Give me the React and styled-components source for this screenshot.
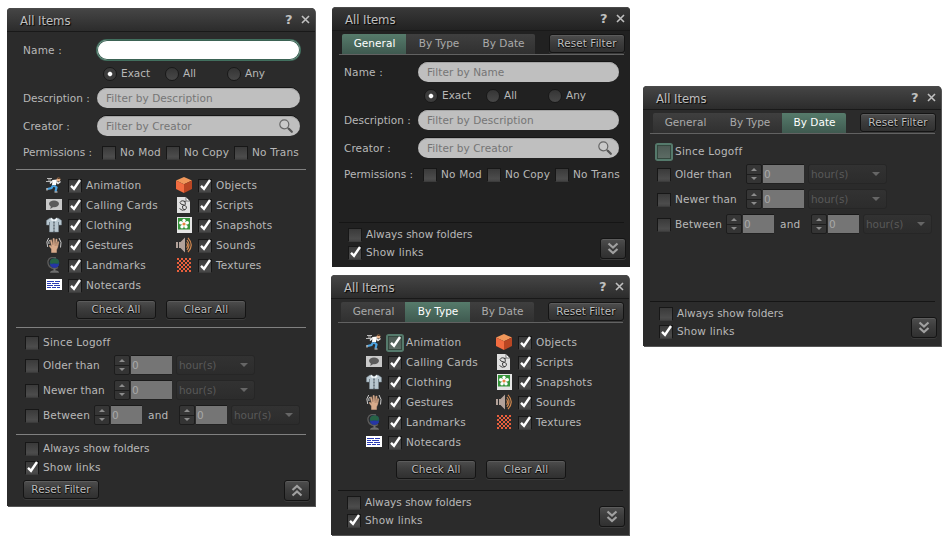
import React from "react";
import styled, { createGlobalStyle, css } from "styled-components";

const Global = createGlobalStyle`
  * { box-sizing: border-box; }
  body { margin: 0; background: #fff; }
`;

const Desktop = styled.div`
  position: relative;
  width: 951px;
  height: 538px;
  overflow: hidden;
  background: #fff;
  font: 10.5px/14px "DejaVu Sans", sans-serif;
  letter-spacing: 0.2px;
  color: #b8b8b8;
  white-space: nowrap;
`;

const Frame = styled.section`
  position: absolute;
  left: ${(p) => p.$x}px;
  top: ${(p) => p.$y}px;
  width: ${(p) => p.$w}px;
  height: ${(p) => p.$h}px;
  display: flex;
  flex-direction: column;
  background: ${(p) => (p.$dark ? "#212121" : "#2b2b2b")};
  border-radius: 4px 4px 0 0;
  box-shadow: ${(p) => (p.$dark ? "none" : "1px 1px 0 #555")};
`;

const TitleBar = styled.header`
  flex: none;
  display: flex;
  align-items: center;
  height: 24px;
  padding: 0 4px 0 13px;
  border-bottom: 1px solid #191919;
  border-top: 1px solid #4a4a4a;
  border-radius: 4px 4px 0 0;
  background: ${(p) =>
    p.$dark ? "linear-gradient(#383838, #222)" : "linear-gradient(#454545, #2c2c2c)"};
`;

const Title = styled.h1`
  flex: 1;
  margin: 0;
  padding-top: 1px;
  font-size: 11.7px;
  font-weight: normal;
  letter-spacing: -0.05px;
  color: #c0c0c0;
  text-shadow: 1px 1px 1px #000;
`;

const Help = styled.span`
  width: 15px;
  font-size: 13px;
  font-weight: bold;
  letter-spacing: 0;
  color: #c0c0c0;
`;

const Panel = styled.div`
  display: flex;
  flex-direction: column;
  padding: ${(p) => p.$top}px 0 0 ${(p) => p.$left}px;
`;

const Line = styled.div`
  flex: none;
  display: flex;
  align-items: center;
  height: ${(p) => p.$h}px;
  margin-top: ${(p) => p.$mt || 0}px;
  padding-left: ${(p) => p.$pl || 0}px;
`;

const Divider = styled.div`
  flex: none;
  height: 1px;
  margin: ${(p) => p.$mt || 0}px ${(p) => p.$mr}px 0 ${(p) => p.$ml}px;
  background: ${(p) => (p.$dark ? "#151515" : "#808080")};
`;

const FieldLabel = styled.span`
  flex: none;
  width: 74px;
  padding-bottom: ${(p) => (p.$flat ? 2 : 1)}px;
  letter-spacing: ${(p) => p.$ls || 0}px;
`;

const Field = styled.div`
  flex: none;
  display: flex;
  align-items: center;
  justify-content: space-between;
  width: ${(p) => p.$w}px;
  height: 20px;
  padding: 0 7px 0 9px;
  border-radius: 10px;
  color: #757575;
  letter-spacing: 0.06px;
  background: #bfbfbf;
  box-shadow: 0 -1px 0 #151515, inset 0 1px 0 #a4a4a4;
  span { padding-bottom: 1px; }
  ${(p) =>
    p.$focus &&
    css`
      background: #fff;
      box-shadow: inset 0 0 0 1px #3b6254, 0 0 0 1px #42705f;
    `}
`;

const RadioItem = styled.label`
  display: flex;
  align-items: center;
  gap: 4px;
  width: ${(p) => p.$w}px;
  letter-spacing: 0;
  span { padding-bottom: 2px; }
`;

const Dot = styled.i`
  width: 14px;
  height: 14px;
  border-radius: 50%;
  border: 1px solid #191919;
  background: ${(p) =>
    p.$on
      ? "radial-gradient(circle, #fff 0 1.6px, #3c3c3c 2.8px)"
      : "linear-gradient(#353535, #484848)"};
`;

const CheckItem = styled.label`
  flex: none;
  display: flex;
  align-items: center;
  height: 14px;
  margin-top: ${(p) => p.$drop || 0}px;
  width: ${(p) => (p.$w ? p.$w + "px" : "auto")};
`;

const Box = styled.i`
  flex: none;
  display: block;
  width: 14px;
  height: 14px;
  margin-right: 4px;
  border: 1px solid #171717;
  border-bottom-color: #3c3c3c;
  border-radius: 1px;
  background: linear-gradient(#3a3a3a, #4c4c4c 80%, #444);
  svg { display: block; overflow: visible; }
  ${(p) =>
    p.$focus &&
    css`
      border-color: #35483f;
      background: linear-gradient(#4d5b55, #5c6b64);
      box-shadow: 0 0 0 2px #557a6c;
    `}
`;

const buttonFace = css`
  border: 1px solid #141414;
  border-radius: 3px;
  background: linear-gradient(#4e4e4e, #3d3d3d 45%, #303030);
  box-shadow: inset 0 1px 0 #5c5c5c, 0 1px 0 #3a3a3a;
`;

const Button = styled.button`
  ${buttonFace}
  flex: none;
  width: ${(p) => p.$w}px;
  height: 19px;
  margin: 0 ${(p) => p.$mr || 0}px 0 0;
  padding: 0;
  font: inherit;
  line-height: 15px;
  letter-spacing: 0.05px;
  color: #bebebe;
  text-shadow: 0 1px 1px #000, 1px 0 1px #111;
`;

const ArrowButton = styled.button`
  ${buttonFace}
  display: flex;
  align-items: center;
  justify-content: center;
  width: 26px;
  height: 21px;
  padding: 0;
  margin: 0;
`;

const TabRow = styled.nav`
  flex: none;
  display: flex;
  justify-content: space-between;
  height: 21px;
  margin: 3px 6px 0 7px;
  border-bottom: 1px solid #626262;
  padding-left: 3px;
`;

const Tabs = styled.div`
  display: flex;
  height: 20px;
`;

const Tab = styled.span`
  width: ${(p) => p.$w}px;
  height: 20px;
  padding-left: 1px;
  line-height: 19px;
  text-align: center;
  letter-spacing: ${(p) => p.$ls}px;
  color: ${(p) => (p.$on ? "#fff" : "#aaa")};
  background: ${(p) =>
    p.$on ? "linear-gradient(#567b6b, #3f5a50)" : "linear-gradient(#3f3f3f, #303030)"};
  &:first-child { border-top-left-radius: 2px; }
  &:last-child { border-top-right-radius: 2px; }
`;

const Columns = styled.div`
  display: grid;
  grid-template-columns: 130px auto;
  align-items: start;
`;

const TypeRow = styled.div`
  display: flex;
  align-items: center;
  height: 20px;
`;

const Caption = styled.span`
  padding-bottom: 2px;
  letter-spacing: ${(p) => (p.$ls === undefined ? "inherit" : p.$ls + "px")};
`;

const Spin = styled.span`
  flex: none;
  display: grid;
  grid-template-rows: 1fr 1fr;
  place-items: center;
  width: 16px;
  height: 20px;
  margin-right: 1px;
  border: 1px solid #1c1c1c;
  border-radius: 2px;
  background: linear-gradient(#363636 0 9px, #1d1d1d 9px 10px, #343434 10px);
`;

const NumberBox = styled.span`
  flex: none;
  width: ${(p) => p.$w}px;
  height: 20px;
  padding: 2px 0 0 1px;
  line-height: 14px;
  margin-right: ${(p) => p.$mr}px;
  border-top: 1px solid #1a1a1a;
  border-bottom: 1px solid #222;
  color: #a8a8a8;
  background: #757575;
`;

const Combo = styled.span`
  flex: none;
  display: flex;
  align-items: center;
  justify-content: space-between;
  width: ${(p) => p.$w}px;
  height: 20px;
  padding: 0 6px 0 2px;
  border: 1px solid #262626;
  border-radius: 3px;
  letter-spacing: -0.05px;
  color: #595959;
  background: linear-gradient(#323232, #2c2c2c);
`;

const Conjunction = styled.span`
  width: 31px;
`;

const Footer = styled.footer`
  flex: none;
  display: flex;
  justify-content: space-between;
  align-items: flex-start;
  height: 44px;
  padding: 5px 4px 0 16px;
`;

const Corner = styled.div`
  padding-top: 10px;
`;

const Stack = styled.div`
  display: flex;
  flex-direction: column;
  gap: ${(p) => p.$gap}px;
`;

const BottomBar = styled.div`
  display: flex;
  justify-content: space-between;
  margin-top: 5px;
  padding: 0 5px 0 16px;
`;

const Spacer = styled.div`
  flex: 1;
`;

const tracking = {
  "Always show folders": 0,
  "Since Logoff": 0.25,
  "Older than": 0.1,
  "Newer than": 0.1,
  Clothing: 0.3,
  Gestures: 0.05,
  Between: 0.15,
  "No Copy": 0.1,
};

function Tick() {
  return (
    <svg width="12" height="12" viewBox="0 0 12 12">
      <path d="M2 5.800 5 8.800 11 0" fill="none" stroke="#fff" strokeWidth="2.400" />
    </svg>
  );
}

function Check({ on, focus, w, drop, children }) {
  return (
    <CheckItem $w={w} $drop={drop}>
      <Box $focus={focus}>{on && <Tick />}</Box>
      <Caption $ls={tracking[children]}>{children}</Caption>
    </CheckItem>
  );
}

const CloseIcon = styled.svg`
  margin-bottom: 2px;
`;

function Close() {
  return (
    <CloseIcon width="11" height="9" viewBox="0 0 11 9">
      <path d="M2 1l7 7M9 1L2 8" stroke="#c0c0c0" strokeWidth="1.600" />
    </CloseIcon>
  );
}

function Magnifier() {
  return (
    <svg width="14" height="14" viewBox="0 0 14 14">
      <circle cx="5.300" cy="5.300" r="4.500" fill="#c9c9c9" stroke="#666" strokeWidth="1.200" />
      <path d="M8.500 8.500l1.500 1.500" stroke="#666" strokeWidth="1.200" />
      <path d="M9.800 9.800l3 3" stroke="#555" strokeWidth="2.200" strokeLinecap="round" />
    </svg>
  );
}

function Chevrons({ up }) {
  return (
    <svg width="12" height="13" viewBox="0 0 12 13">
      <path
        d={up ? "M1.500 6L6 2l4.500 4M1.500 11.500L6 7.500l4.500 4" : "M1.500 1.500L6 5.500l4.500-4M1.500 7L6 11l4.500-4"}
        fill="none"
        stroke="#a0a0a0"
        strokeWidth="2.200"
      />
    </svg>
  );
}

function Triangle({ up, big }) {
  return (
    <svg width={big ? 8 : 6} height={big ? 4 : 3} viewBox="0 0 8 4" preserveAspectRatio="none">
      <path d={up ? "M0 4L4 0l4 4z" : "M0 0h8L4 4z"} fill={big ? "#666" : "#8c8c8c"} />
    </svg>
  );
}

const kinds = {
  Animation: (
    <>
      <path d="M1 1.500h5M0 4.500h5M2 3h3" stroke="#ddd" strokeWidth=".8" />
      <path d="M6.500 3L11 2.500 10 8 6 8.500z" fill="#fff" />
      <path d="M7 3.500L4 6.500M10.500 4.500L12 6.500l2.500-2" stroke="#eee" strokeWidth="1.500" fill="none" />
      <circle cx="12.500" cy="2.500" r="1.900" fill="#e9b48d" />
      <path d="M11 1.500Q12-.2 14.500.8l-.5 1-2 .3z" fill="#54371f" />
      <path d="M8 8.500l2.500 2-1 4M7 8.500L5.500 11 1.500 12" stroke="#4ba3e2" strokeWidth="2.200" fill="none" />
      <path d="M8.500 15h3M1 11v2.500" stroke="#ddd" strokeWidth="1.200" />
    </>
  ),
  "Calling Cards": (
    <>
      <path d="M0 2h16v11H0z" fill="#c9c9c9" />
      <ellipse cx="8" cy="6.800" rx="5" ry="3.400" fill="#5b5b5b" />
      <path d="M5 8.500L4.300 12 8 9.500z" fill="#5b5b5b" />
    </>
  ),
  Clothing: (
    <>
      <path d="M4 1L.5 3.500v4.500h3V15h9V8h3V3.500L12 1 8 2.500z" fill="#b8c7d0" stroke="#7c8b94" strokeWidth=".5" />
      <path d="M5 .5l3 2.500 3-2.500.5 2.500L9 4.500 8 3.500l-1 1L4.500 3z" fill="#edf3f6" />
      <path d="M8 4.500v10.500" stroke="#52616b" strokeWidth="1.400" />
      <path d="M3.500 5v3M12.500 5v3" stroke="#75848e" />
      <path d="M7.500 7h1M7.500 10h1M7.500 13h1" stroke="#eee" />
    </>
  ),
  Gestures: (
    <>
      <path d="M5.500 15.500V12L3 8.800l1-.6 1.700 1.500L4.300 3.200l1-.4 1.800 4.700L7 1.500h1.200l.7 5.700L10 2l1.100.3-.5 5.700 1.200-3.500 1 .4-1 5-1.300 3.100v2.500z" fill="#d9ab8b" stroke="#d9ab8b" strokeWidth=".5" />
      <path d="M6.800 3v5M9.200 3v6M11 5v4" stroke="#71513f" strokeWidth=".4" />
      <path d="M2.700 1Q-.5 4.500 1.700 10M4 3Q2 4.500 3 7M13 1q3.300 4 1.500 9.500" fill="none" stroke="#ddd" strokeWidth=".9" />
    </>
  ),
  Landmarks: (
    <>
      <circle cx="8.500" cy="6" r="4.800" fill="#1d4f6c" />
      <path d="M3.900 5a4.800 4.800 0 0 1 9.200 0l-2 1.500-3.500-.5-2 .7z" fill="#276345" />
      <path d="M3.900 7.500q4.600-1.500 9.200 0a4.800 4.800 0 0 1-9.200 0z" fill="#2635a6" />
      <path d="M10 .8Q3.500-.8 2 4q-.6 5 4 7.200 3.500 1.300 6-.7" fill="none" stroke="#5c5c5c" strokeWidth="1.300" />
      <path d="M7.500 11.500h2v2h-2zM4 15.800q0-2.500 4.500-2.500t4.500 2.500z" fill="#6f6f6f" />
    </>
  ),
  Notecards: (
    <>
      <path d="M0 2h16v11H0z" fill="#fff" />
      <path d="M1 4.500h7m1 0h5M1 6.500h4m1 0h7M1 8.500h6m1 0h6M1 10.500h4m1 0h4m1 0h3" stroke="#2a3bb5" />
    </>
  ),
  Objects: (
    <>
      <path d="M8 0l8 3.500L8 7.200 0 3.500z" fill="#f0975a" />
      <path d="M0 3.500l8 3.700V16l-8-4z" fill="#f26c40" />
      <path d="M16 3.500L8 7.200V16l8-4z" fill="#b94623" />
    </>
  ),
  Scripts: (
    <>
      <path d="M1 0h9l4 4v12H1z" fill="#e0e0e0" />
      <path d="M10 0v4h4z" fill="#fff" stroke="#444" strokeWidth=".7" />
      <path d="M10 5Q5.500 2.300 4 5.500q0 2 4 2.500 4 1.500 1.500 4.500-3.500 2-6-1M8 4q3.500 4-1.500 5-1 3 2.500 4" fill="none" stroke="#333" strokeWidth=".9" />
    </>
  ),
  Snapshots: (
    <>
      <path d="M1 0h15v16H1z" fill="#e6e6e6" />
      <path d="M2 1h12v11.500H2z" fill="#37953b" />
      <g fill="#fff">
        <circle cx="8" cy="3.500" r="1.700" />
        <circle cx="11.200" cy="5.800" r="1.800" />
        <circle cx="10" cy="9.700" r="1.700" />
        <circle cx="6" cy="9.700" r="1.700" />
        <circle cx="4.800" cy="5.800" r="1.800" />
        <circle cx="8" cy="7" r="2.500" />
      </g>
      <circle cx="8" cy="7" r="1.600" fill="#e8843f" />
    </>
  ),
  Sounds: (
    <>
      <path d="M0 5h2v6H0zM3 5h1.500L9 .5v15L4.500 11H3z" fill="#b3a29a" />
      <path d="M10.500 5.500q2 2.500 0 5M11 3q4 5 0 10M12 .8q6.500 7.200 0 14.400" fill="none" stroke="#d28950" strokeWidth="1.200" />
    </>
  ),
  Textures: (
    <>
      {Array.from({ length: 49 }, (_, i) => i)
        .filter((i) => i % 2 === 0)
        .map((i) => (
          <rect key={i} x={1 + (i % 7) * 2} y={1 + Math.floor(i / 7) * 2} width="2" height="2" fill="#e95f3c" />
        ))}
    </>
  ),
};

const KindIcon = styled.svg`
  flex: none;
  margin: 0 6px 1px 0;
`;

const leftKinds = ["Animation", "Calling Cards", "Clothing", "Gestures", "Landmarks", "Notecards"];
const rightKinds = ["Objects", "Scripts", "Snapshots", "Sounds", "Textures"];

function KindList({ names, focus }) {
  return (
    <div>
      {names.map((name) => (
        <TypeRow key={name}>
          <KindIcon width="16" height="17" viewBox="0 0 16 17">
            {kinds[name]}
          </KindIcon>
          <Check on focus={focus === name}>{name}</Check>
        </TypeRow>
      ))}
    </div>
  );
}

function TypeFilters({ gap, focus }) {
  return (
    <>
      <Columns>
        <KindList names={leftKinds} focus={focus} />
        <KindList names={rightKinds} />
      </Columns>
      <Line $h={19} $mt={gap} $pl={30}>
        <Button $w={80} $mr={10}>Check All</Button>
        <Button $w={80}>Clear All</Button>
      </Line>
    </>
  );
}

function GeneralFilters({ focused, width }) {
  return (
    <>
      <Line $h={20}>
        <FieldLabel $ls={0.2}>Name :</FieldLabel>
        <Field $w={width} $focus={focused}>{!focused && <span>Filter by Name</span>}</Field>
      </Line>
      <Line $h={26} $mt={1} $pl={80}>
        <RadioItem $w={62}><Dot $on /><span>Exact</span></RadioItem>
        <RadioItem $w={62}><Dot /><span>All</span></RadioItem>
        <RadioItem><Dot /><span>Any</span></RadioItem>
      </Line>
      <Line $h={20} $mt={1}>
        <FieldLabel>Description :</FieldLabel>
        <Field $w={width}><span>Filter by Description</span></Field>
      </Line>
      <Line $h={20} $mt={8}>
        <FieldLabel $ls={0.1}>Creator :</FieldLabel>
        <Field $w={width}><span>Filter by Creator</span><Magnifier /></Field>
      </Line>
      <Line $h={14} $mt={10}>
        <FieldLabel $flat>Permissions :</FieldLabel>
        <Line $h={14} $pl={5}>
          <Check w={64}>No Mod</Check>
          <Check w={68}>No Copy</Check>
          <Check>No Trans</Check>
        </Line>
      </Line>
    </>
  );
}

function Spinner({ w, mr }) {
  return (
    <>
      <Spin><Triangle up /><Triangle /></Spin>
      <NumberBox $w={w} $mr={mr}>0</NumberBox>
    </>
  );
}

function Units({ w }) {
  return <Combo $w={w}>hour(s)<Triangle big /></Combo>;
}

function DateFilters({ focus }) {
  return (
    <>
      <Line $h={14}><Check focus={focus}>Since Logoff</Check></Line>
      <Line $h={20} $mt={5}>
        <Check w={89} drop={2}>Older than</Check>
        <Spinner w={41} mr={4} />
        <Units w={79} />
      </Line>
      <Line $h={20} $mt={5}>
        <Check w={89} drop={2}>Newer than</Check>
        <Spinner w={41} mr={4} />
        <Units w={79} />
      </Line>
      <Line $h={20} $mt={5}>
        <Check w={69} drop={2}>Between</Check>
        <Spinner w={31} mr={6} />
        <Conjunction>and</Conjunction>
        <Spinner w={31} mr={4} />
        <Units w={69} />
      </Line>
    </>
  );
}

function Window({ x, y, w, h, dark, children }) {
  return (
    <Frame $x={x} $y={y} $w={w} $h={h} $dark={dark}>
      <TitleBar $dark={dark}>
        <Title>All Items</Title>
        <Help>?</Help>
        <Close />
      </TitleBar>
      {children}
    </Frame>
  );
}

const tabs = [
  { name: "General", width: 64, spacing: 0.05 },
  { name: "By Type", width: 65, spacing: -0.05 },
  { name: "By Date", width: 64, spacing: 0.05 },
];

function TabbedWindow({ active, left, top, children, ...frame }) {
  return (
    <Window w={298} h={260} {...frame}>
      <TabRow>
        <Tabs>
          {tabs.map((tab) => (
            <Tab key={tab.name} $w={tab.width} $ls={tab.spacing} $on={tab.name === active}>
              {tab.name}
            </Tab>
          ))}
        </Tabs>
        <Line $h={19}><Button $w={76} $mr={-1}>Reset Filter</Button></Line>
      </TabRow>
      <Panel $left={left} $top={top}>{children}</Panel>
      <Spacer />
      <Divider $dark $ml={7} $mr={6} />
      <Footer>
        <Stack $gap={4}>
          <Check>Always show folders</Check>
          <Check on>Show links</Check>
        </Stack>
        <Corner><ArrowButton><Chevrons /></ArrowButton></Corner>
      </Footer>
    </Window>
  );
}

export default function App() {
  return (
    <>
      <Global />
      <Desktop>
        <Window x={7} y={8} w={308} h={498}>
          <Panel $left={16} $top={8}><GeneralFilters focused width={203} /></Panel>
          <Divider $mt={9} $ml={9} $mr={9} />
          <Panel $left={39} $top={6}><TypeFilters gap={4} /></Panel>
          <Divider $mt={8} $ml={9} $mr={9} />
          <Panel $left={18} $top={8}><DateFilters /></Panel>
          <Divider $mt={9} $ml={9} $mr={9} />
          <Panel $left={18} $top={7}>
            <Stack $gap={5}>
              <Check>Always show folders</Check>
              <Check on>Show links</Check>
            </Stack>
          </Panel>
          <BottomBar>
            <Button $w={76}>Reset Filter</Button>
            <ArrowButton><Chevrons up /></ArrowButton>
          </BottomBar>
        </Window>
        <TabbedWindow x={332} y={7} dark active="General" left={12} top={7}>
          <GeneralFilters width={201} />
        </TabbedWindow>
        <TabbedWindow x={331} y={275} active="By Type" left={35} top={10}>
          <TypeFilters gap={7} focus="Animation" />
        </TabbedWindow>
        <TabbedWindow x={643} y={86} active="By Date" left={14} top={11}>
          <DateFilters focus />
        </TabbedWindow>
      </Desktop>
    </>
  );
}
